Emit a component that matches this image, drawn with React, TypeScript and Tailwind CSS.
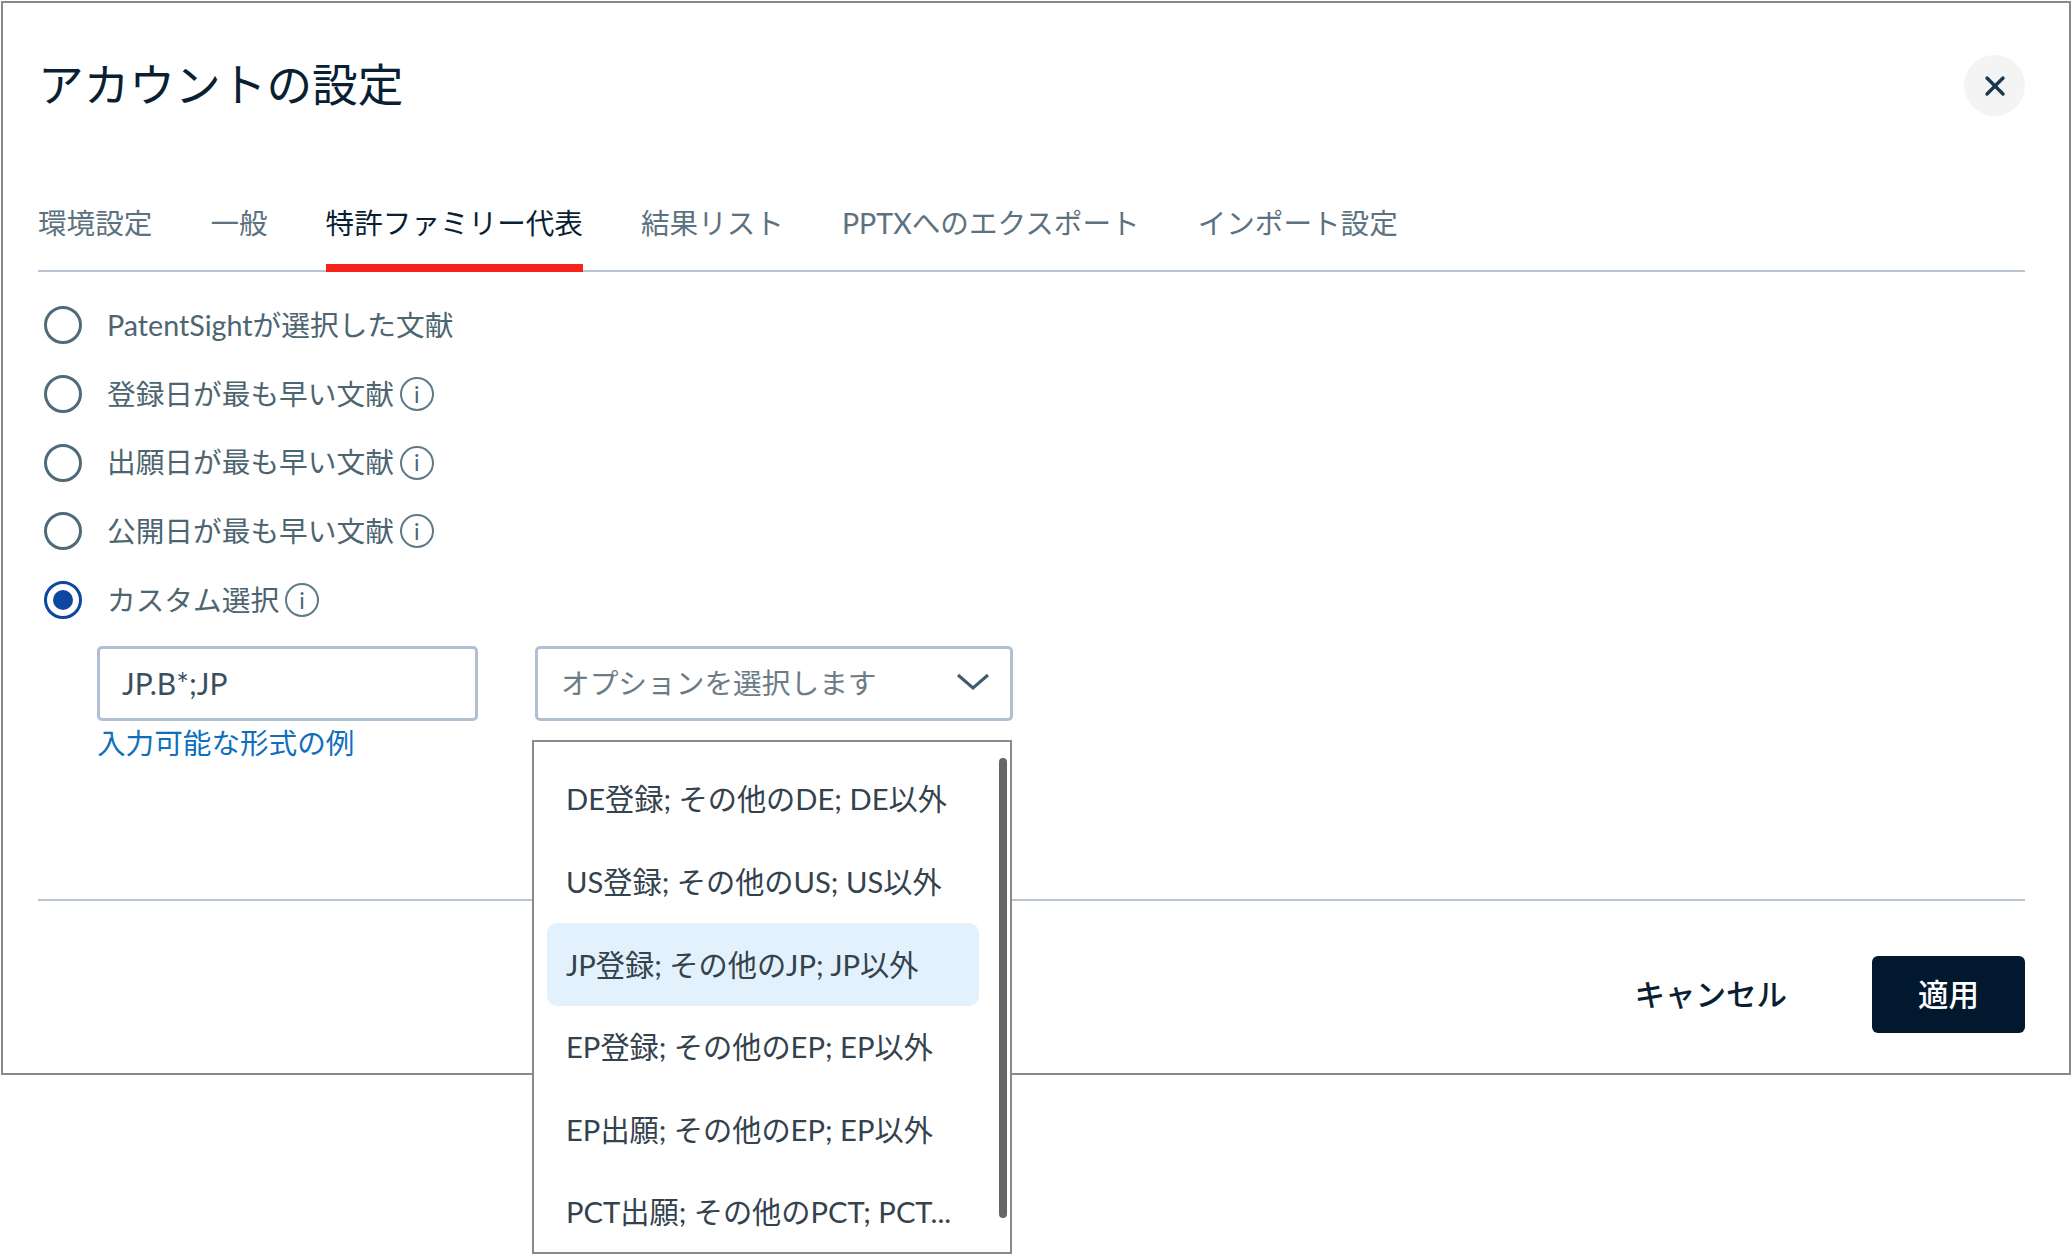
import React from 'react';
import { X } from 'lucide-react';

const FONT = "font-['Lato','Noto_Sans_CJK_JP',sans-serif]";

const TABS = ['環境設定', '一般', '特許ファミリー代表', '結果リスト', 'PPTXへのエクスポート', 'インポート設定'];

const RADIOS = [
  { label: 'PatentSightが選択した文献', info: false, checked: false },
  { label: '登録日が最も早い文献', info: true, checked: false },
  { label: '出願日が最も早い文献', info: true, checked: false },
  { label: '公開日が最も早い文献', info: true, checked: false },
  { label: 'カスタム選択', info: true, checked: true },
];

const OPTIONS = [
  'DE登録; その他のDE; DE以外',
  'US登録; その他のUS; US以外',
  'JP登録; その他のJP; JP以外',
  'EP登録; その他のEP; EP以外',
  'EP出願; その他のEP; EP以外',
  'PCT出願; その他のPCT; PCT...',
];

const InfoIcon = () => (
  <span className="ml-[6px] flex h-[34px] w-[34px] items-center justify-center rounded-full border-2 border-[#5f7a86] text-[23px] leading-none text-[#4d6570]">
    i
  </span>
);

function App() {
  return (
    <div className={`relative h-[1255px] w-[2072px] overflow-hidden bg-white pl-px pt-px ${FONT}`}>
      {/* dialog */}
      <div className="flex h-[1074px] w-[2070px] flex-col border-2 border-[#8a8a8a] pr-[44px] pl-[35px]">
        <header className="flex h-[162px] shrink-0 items-start justify-between">
          <h1 className="mt-[52px] text-[45.7px] leading-[60px] font-normal text-[#0b1f33]">アカウントの設定</h1>
          <button className="mt-[52px] flex h-[61px] w-[61px] items-center justify-center rounded-full bg-[#f4f4f4] text-[#17384f]">
            <X size={32} strokeWidth={2.5} />
          </button>
        </header>

        <nav className="flex h-[107px] shrink-0 gap-[58px] border-b-2 border-[#b8c4d2]">
          {TABS.map((tab, i) => (
            <div
              key={tab}
              className={
                i === 2
                  ? 'h-[107px] border-b-[8px] border-[#f5231b] pt-[38px] text-[28.6px] leading-[40px] text-[#0b1f33]'
                  : 'pt-[38px] text-[28.6px] leading-[40px] text-[#5d7280]'
              }
            >
              {tab}
            </div>
          ))}
        </nav>

        <div className="flex shrink-0 flex-col pt-[19px] pl-[6px]">
          {RADIOS.map((r) => (
            <label key={r.label} className="flex h-[68.7px] items-center text-[28.7px] text-[#4d6570]">
              {r.checked ? (
                <span className="flex h-[38px] w-[38px] items-center justify-center rounded-full border-[3px] border-[#0d47a1]">
                  <span className="h-[20px] w-[20px] rounded-full bg-[#0d47a1]" />
                </span>
              ) : (
                <span className="h-[38px] w-[38px] rounded-full border-[3px] border-[#4f6b7a]" />
              )}
              <span className="ml-[25px]">{r.label}</span>
              {r.info && <InfoIcon />}
            </label>
          ))}
        </div>

        <div className="mt-[12px] flex shrink-0 gap-[57px] pl-[59px]">
          <div className="w-[381px]">
            <div className="flex h-[75px] items-center rounded-[5px] border-[3px] border-[#b0c0d2] pl-[22px] text-[30px] text-[#3c4f5c]">
              JP.B*;JP
            </div>
            <a className="mt-[2px] block text-[28.6px] leading-[40px] text-[#0f6fbd]">入力可能な形式の例</a>
          </div>
          <div className="flex h-[75px] w-[478px] items-center justify-between rounded-[5px] border-[3px] border-[#b0c0d2] pr-[20px] pl-[23px] text-[28.7px] text-[#6c7c86]">
            オプションを選択します
            <svg width="34" height="18" viewBox="0 0 34 18" fill="none" className="-mt-[4px] text-[#3f5a68]">
              <path d="M2 2L17 15L32 2" stroke="currentColor" strokeWidth="3" />
            </svg>
          </div>
        </div>

        <div className="flex-1" />

        <footer className="flex h-[174px] shrink-0 items-start justify-end border-t-2 border-[#b8c4d2]">
          <button className="mt-[55px] mr-[85px] h-[77px] text-[30.5px] font-medium text-[#0b1f33]">キャンセル</button>
          <button className="mt-[55px] h-[77px] w-[153px] rounded-[6px] bg-[#02182f] text-[30.5px] font-medium text-white">適用</button>
        </footer>
      </div>

      {/* open select menu */}
      <div className="absolute top-[740px] left-[532px] h-[514px] w-[480px] border-2 border-[#8a8a8a] bg-white pt-[16px] pl-[13px]">
        <ul className="flex w-[432px] flex-col">
          {OPTIONS.map((o, i) => (
            <li
              key={o}
              className={
                i === 2
                  ? 'flex h-[83px] items-center rounded-[10px] bg-[#e3f1fc] pl-[19px] text-[29.2px] whitespace-nowrap text-[#33424d]'
                  : 'flex h-[82.5px] items-center pl-[19px] text-[29.2px] whitespace-nowrap text-[#33424d]'
              }
            >
              {o}
            </li>
          ))}
        </ul>
        <div className="absolute top-[16px] right-[3px] h-[460px] w-[8px] rounded-full bg-[#666666]" />
      </div>
    </div>
  );
}

export default App;
